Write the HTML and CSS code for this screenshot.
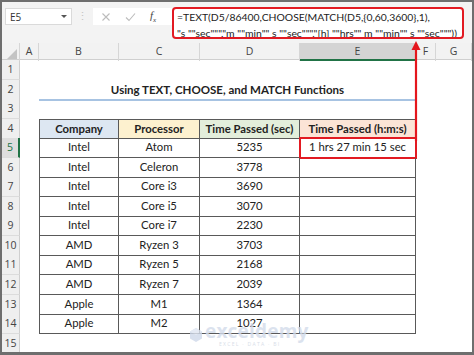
FILE: index.html
```html
<!DOCTYPE html>
<html>
<head>
<meta charset="utf-8">
<link rel="stylesheet" href="styles.css">
</head>
<body>
<div class="app">
  <div class="toolbar">
    <div class="namebox"><span>E5</span><span class="dd"></span></div>
    <div class="grip">⋮</div>
    <div class="fxbox">
      <svg class="ic" width="10" height="10" viewBox="0 0 10 10"><path d="M1.5 1.5 L8.5 8.5 M8.5 1.5 L1.5 8.5" stroke="#bcbcbc" stroke-width="1.1" fill="none"/></svg>
      <svg class="ic" width="11" height="10" viewBox="0 0 11 10"><path d="M1 5.5 L4 8.5 L10 1.5" stroke="#bcbcbc" stroke-width="1.1" fill="none"/></svg>
      <span class="fx">f<sub>x</sub></span>
    </div>
    <div class="formula">=TEXT(D5/86400,CHOOSE(MATCH(D5,{0,60,3600},1),<br>"s ""sec""","m ""min"" s ""sec""","[h] ""hrs"" m ""min"" s ""sec"""))</div>
  </div>

  <div class="sheet">
    <div class="row colhead">
      <div class="corner"><span class="tri"></span></div>
      <div class="ch">A</div><div class="ch">B</div><div class="ch">C</div><div class="ch">D</div><div class="ch sel">E</div><div class="ch">F</div><div class="ch">G</div>
    </div>
    <div class="row"><div class="rh">1</div></div>
    <div class="row"><div class="rh">2</div><div class="gap"></div><div class="title">Using TEXT, CHOOSE, and MATCH Functions</div></div>
    <div class="row"><div class="rh">3</div></div>
    <div class="row"><div class="rh">4</div><div class="gap"></div>
      <div class="c h first top blue">Company</div><div class="c h top yellow">Processor</div><div class="c h top green">Time Passed (sec)</div><div class="c h top orange">Time Passed (h:m:s)</div></div>
    <div class="row"><div class="rh rsel">5</div><div class="gap"></div>
      <div class="c first">Intel</div><div class="c">Atom</div><div class="c">5235</div><div class="c active">1 hrs 27 min 15 sec</div></div>
    <div class="row"><div class="rh">6</div><div class="gap"></div>
      <div class="c first">Intel</div><div class="c">Celeron</div><div class="c">3778</div><div class="c"></div></div>
    <div class="row"><div class="rh">7</div><div class="gap"></div>
      <div class="c first">Intel</div><div class="c">Core i3</div><div class="c">3690</div><div class="c"></div></div>
    <div class="row"><div class="rh">8</div><div class="gap"></div>
      <div class="c first">Intel</div><div class="c">Core i5</div><div class="c">3070</div><div class="c"></div></div>
    <div class="row"><div class="rh">9</div><div class="gap"></div>
      <div class="c first">Intel</div><div class="c">Core i7</div><div class="c">2230</div><div class="c"></div></div>
    <div class="row"><div class="rh">10</div><div class="gap"></div>
      <div class="c first">AMD</div><div class="c">Ryzen 3</div><div class="c">3703</div><div class="c"></div></div>
    <div class="row"><div class="rh">11</div><div class="gap"></div>
      <div class="c first">AMD</div><div class="c">Ryzen 5</div><div class="c">2168</div><div class="c"></div></div>
    <div class="row"><div class="rh">12</div><div class="gap"></div>
      <div class="c first">AMD</div><div class="c">Ryzen 7</div><div class="c">2039</div><div class="c"></div></div>
    <div class="row"><div class="rh">13</div><div class="gap"></div>
      <div class="c first">Apple</div><div class="c">M1</div><div class="c">1364</div><div class="c"></div></div>
    <div class="row"><div class="rh">14</div><div class="gap"></div>
      <div class="c first">Apple</div><div class="c">M2</div><div class="c">1027</div><div class="c"></div></div>
    <div class="row"><div class="rh">15</div></div>
  </div>

  <svg class="arrow" width="12" height="100" viewBox="0 0 12 100">
    <path d="M6 4 L6 100" stroke="#e4161d" stroke-width="2.2" fill="none"/>
    <path d="M6 0 L10.5 9 L1.5 9 Z" fill="#e4161d"/>
  </svg>

  <div class="watermark">
    <svg width="12" height="14" viewBox="0 0 12 14"><path d="M6 0 L12 3.5 L12 10.5 L6 14 L0 10.5 L0 3.5 Z" fill="#cfd9ea"/><path d="M6 0 L12 3.5 L6 7 L0 3.5 Z" fill="#dfe6f2"/></svg>
    <div class="wm-text"><span class="wm-name">exceldemy</span><span class="wm-sub">EXCEL · DATA · BI</span></div>
  </div>
</div>
</body>
</html>
```

FILE: styles.css
```css
* { box-sizing: border-box; }
html, body { margin: 0; padding: 0; }
body { width: 474px; height: 355px; overflow: hidden; background: #fff; }

.app {
  position: relative;
  width: 474px;
  height: 355px;
  overflow: hidden;
  border-top: 2px solid #6e6e6e;
  border-left: 2px solid #6e6e6e;
  border-right: 2px solid #6e6e6e;
  border-bottom: 3px solid #6e6e6e;
  font-family: "Lato", "Open Sans", sans-serif;
  color: #222;
}

/* formula toolbar */
.toolbar {
  height: 41px;
  background: #f3f3f3;
  display: flex;
  align-items: flex-start;
  padding-left: 3px;
}
.namebox {
  margin-top: 6px;
  width: 67px;
  height: 17px;
  background: #fff;
  border: 1px solid #dadada;
  display: flex;
  align-items: center;
  justify-content: space-between;
  padding: 0 4px 0 4px;
  font-family: "Open Sans", sans-serif;
  font-size: 10px;
  color: #333;
}
.dd {
  width: 0; height: 0;
  border-left: 3px solid transparent;
  border-right: 3px solid transparent;
  border-top: 3px solid #555;
}
.grip {
  margin-top: 7px;
  width: 21px;
  text-align: center;
  font-size: 11px;
  color: #c4c4c4;
}
.fxbox {
  margin-top: 6px;
  width: 79px;
  height: 17px;
  background: #fff;
  display: flex;
  align-items: center;
  padding-left: 8px;
  gap: 14px;
}
.fx {
  font-family: "Liberation Serif", serif;
  font-style: italic;
  font-size: 11px;
  color: #444;
}
.fx sub { font-size: 7px; }
.formula {
  margin-top: 5px;
  width: 292px;
  height: 32px;
  background: #fff;
  border: 2px solid #e21a22;
  border-radius: 4px;
  padding: 0 0 0 3px;
  font-family: "Lato", sans-serif;
  font-size: 10.4px;
  line-height: 16px;
  color: #222;
  white-space: nowrap;
  overflow: hidden;
}

/* sheet */
.sheet { display: flex; flex-direction: column; }
.row {
  display: grid;
  grid-template-columns: 18px 19px 80px 81px 100px 116px 20px 36px;
  height: 19.55px;
}
.row.colhead { height: 17px; background: #f2f2f2; border-bottom: 1px solid #cfcfcf; }
.corner { position: relative; border-right: 1px solid #d6d6d6; }
.tri {
  position: absolute; right: 2px; bottom: 2px;
  width: 0; height: 0;
  border-left: 10px solid transparent;
  border-bottom: 10px solid #c4c4c4;
}
.ch {
  border-right: 1px solid #d6d6d6;
  text-align: center;
  font-family: "Open Sans", sans-serif;
  font-size: 10.5px;
  line-height: 16px;
  color: #444;
}
.ch.sel { background: #d4d4d4; border-bottom: 2px solid #217346; }

.rh {
  background: #efefef;
  border-right: 1px solid #cfcfcf;
  border-bottom: 1px solid #dcdcdc;
  text-align: center;
  font-family: "Open Sans", sans-serif;
  font-size: 10.5px;
  line-height: 19px;
  color: #444;
}
.rh.rsel { background: #dedede; border-right: 2px solid #217346; color: #217346; }

.title {
  grid-column: 3 / 7;
  border-bottom: 2px solid #a7c3e2;
  text-align: center;
  font-weight: 700;
  font-size: 11.5px;
  line-height: 19px;
}

.c {
  border-right: 1px solid #595959;
  border-bottom: 1px solid #595959;
  text-align: center;
  font-size: 11.3px;
  line-height: 18px;
  white-space: nowrap;
}
.c.first { border-left: 1px solid #595959; }
.c.top { border-top: 1px solid #595959; line-height: 17px; }
.c.h { font-weight: 700; }
.blue { background: #dde7f2; }
.yellow { background: #fdf1cf; }
.green { background: #e3eedb; }
.orange { background: #fbe4d6; }
.c.active { outline: 2px solid #e21a22; outline-offset: -1px; }

/* annotation overlays */
.arrow { position: absolute; left: 408px; top: 39px; }
.watermark {
  position: absolute;
  left: 188px;
  top: 320px;
  display: flex;
  align-items: center;
  gap: 3px;
  opacity: 0.8;
  pointer-events: none;
}
.wm-text { display: flex; flex-direction: column; }
.wm-name {
  font-family: "Open Sans", sans-serif;
  font-weight: 700;
  font-size: 19px;
  line-height: 19px;
  color: #d3dceb;
  letter-spacing: 0.2px;
}
.wm-sub {
  font-family: "Open Sans", sans-serif;
  font-size: 5px;
  letter-spacing: 1.3px;
  color: #cfd7e4;
  padding-left: 14px;
}
```
